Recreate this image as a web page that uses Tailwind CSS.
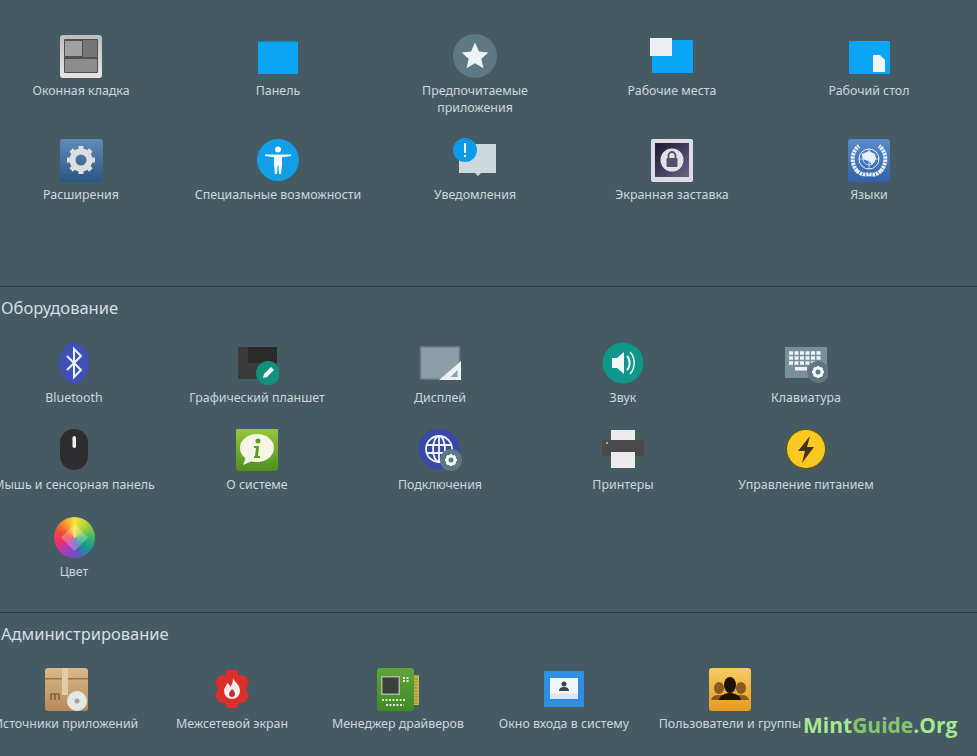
<!DOCTYPE html>
<html lang="ru">
<head>
    <meta charset="UTF-8">
    <meta name="viewport" content="width=device-width, initial-scale=1.0">
    <script src="https://cdn.jsdelivr.net/npm/@tailwindcss/browser@4"></script>
    <title>Параметры системы</title>
</head>
<body class="bg-[#465a63] font-['Noto_Sans','Open_Sans',sans-serif] text-[12.4px] leading-[17px] text-[#ccd7db] overflow-hidden">
<div class="relative h-[756px] w-[977px] overflow-hidden">

    <!-- Personal -->
    <section class="h-[286px] pt-[34px]">
        <div class="grid grid-cols-[repeat(5,197px)] auto-rows-[104px] ml-[-17.5px]">
            <div class="flex flex-col items-center">
                <svg class="w-[44px] h-[44px]" viewBox="0 0 44 44">
                    <defs><linearGradient id="tileFrame" x1="0" y1="0" x2="0" y2="1"><stop offset="0" stop-color="#bdbdbd"/><stop offset="1" stop-color="#e6e6e6"/></linearGradient></defs>
                    <rect x="1" y="1" width="42" height="43" rx="3" fill="url(#tileFrame)"/>
                    <rect x="5" y="5" width="34" height="34" rx="1" fill="#4f4f4f"/>
                    <rect x="6" y="7" width="17" height="15" fill="#a0a0a0"/>
                    <rect x="24" y="6" width="14" height="17" fill="#767676"/>
                    <rect x="6" y="25" width="32" height="13" fill="#8c8c8c"/>
                </svg>
                <span class="mt-[4px]">Оконная кладка</span>
            </div>
            <div class="flex flex-col items-center">
                <svg class="w-[44px] h-[44px]" viewBox="0 0 44 44">
                    <rect x="2" y="7" width="40" height="33" rx="1" fill="#0aa5f5"/>
                    <rect x="2" y="7" width="40" height="1.500" fill="#1588c4"/>
                </svg>
                <span class="mt-[4px]">Панель</span>
            </div>
            <div class="flex flex-col items-center">
                <svg class="w-[44px] h-[44px]" viewBox="0 0 44 44">
                    <circle cx="22" cy="22" r="22" fill="#5f7885"/>
                    <path d="M22 8.500l4 9 9.500.9-7.200 6.300 2.200 9.500-8.500-5-8.500 5 2.200-9.500-7.200-6.300 9.500-.9z" fill="#eef2f4"/>
                </svg>
                <span class="mt-[4px] text-center">Предпочитаемые<br>приложения</span>
            </div>
            <div class="flex flex-col items-center">
                <svg class="w-[44px] h-[44px]" viewBox="0 0 44 44">
                    <rect x="2" y="6" width="41" height="33" rx="1" fill="#0aa5f5"/>
                    <rect x="0" y="4" width="22" height="18" fill="#eceff0"/>
                </svg>
                <span class="mt-[4px]">Рабочие места</span>
            </div>
            <div class="flex flex-col items-center">
                <svg class="w-[44px] h-[44px]" viewBox="0 0 44 44">
                    <rect x="2" y="7" width="41" height="33" rx="1" fill="#0aa5f5"/>
                    <path d="M26 21h7l5 5v12H26z" fill="#eef4f6"/>
                </svg>
                <span class="mt-[4px]">Рабочий стол</span>
            </div>

            <div class="flex flex-col items-center">
                <svg class="w-[44px] h-[44px]" viewBox="0 0 44 44">
                    <defs><linearGradient id="extBg" x1="0" y1="0" x2="0" y2="1"><stop offset="0" stop-color="#5f8cb8"/><stop offset="1" stop-color="#2a5583"/></linearGradient></defs>
                    <rect x="1" y="1" width="43" height="43" rx="3" fill="url(#extBg)"/>
                    <circle cx="22" cy="22" r="8.500" fill="none" stroke="#dedede" stroke-width="6"/>
                    <path d="M22 8v5M22 36v-5M8 22h5M36 22h-5M12.100 12.100l3.500 3.500M31.900 31.900l-3.500-3.500M31.900 12.100l-3.500 3.500M12.100 31.900l3.500-3.500" stroke="#dedede" stroke-width="5"/>
                </svg>
                <span class="mt-[4px]">Расширения</span>
            </div>
            <div class="flex flex-col items-center">
                <svg class="w-[44px] h-[44px]" viewBox="0 0 44 44">
                    <circle cx="22" cy="22" r="21" fill="#129fe6"/>
                    <circle cx="22" cy="11.500" r="3" fill="#f2fafd"/>
                    <path d="M9 16.500h26V18l-9 1.200V27l-1 9h-2l-.6-8.500h-.8L21 36h-2l-1-9v-7.800L9 18z" fill="#f2fafd"/>
                </svg>
                <span class="mt-[4px] whitespace-nowrap">Специальные возможности</span>
            </div>
            <div class="flex flex-col items-center">
                <svg class="w-[44px] h-[44px]" viewBox="0 0 44 44">
                    <path d="M6 6h37v29H28l-3 3-3-3H6z" fill="#cfd8dc"/>
                    <circle cx="12" cy="12" r="12" fill="#0f9ae8"/>
                    <rect x="11" y="5" width="2" height="10" fill="#f4fbff"/>
                    <rect x="11" y="17" width="2" height="2" fill="#f4fbff"/>
                </svg>
                <span class="mt-[4px]">Уведомления</span>
            </div>
            <div class="flex flex-col items-center">
                <svg class="w-[44px] h-[44px]" viewBox="0 0 44 44">
                    <defs><linearGradient id="lockBg" x1="0" y1="0" x2="1" y2="1"><stop offset="0" stop-color="#1b1830"/><stop offset="1" stop-color="#6c6288"/></linearGradient></defs>
                    <rect x="1" y="1" width="42" height="43" rx="2" fill="#dcdce4"/>
                    <rect x="5" y="5" width="34" height="34" fill="url(#lockBg)"/>
                    <circle cx="22" cy="22" r="11.500" fill="#e2e2e6"/>
                    <rect x="16.500" y="20" width="11" height="9" rx="1" fill="#54506e"/>
                    <path d="M18.500 20v-2.500a3.500 3.500 0 0 1 7 0V20" fill="none" stroke="#54506e" stroke-width="1.800"/>
                </svg>
                <span class="mt-[4px]">Экранная заставка</span>
            </div>
            <div class="flex flex-col items-center">
                <svg class="w-[44px] h-[44px]" viewBox="0 0 44 44">
                    <defs><linearGradient id="langBg" x1="0" y1="0" x2="0" y2="1"><stop offset="0" stop-color="#5a8ccb"/><stop offset="1" stop-color="#2f62a8"/></linearGradient></defs>
                    <rect x="1" y="1" width="42" height="43" rx="3" fill="url(#langBg)"/>
                    <g fill="none" stroke="#e9eff7">
                        <circle cx="22" cy="21" r="10" stroke-width="1"/>
                        <circle cx="22" cy="21" r="6" stroke-width=".8"/>
                        <path d="M22 11v20M12 21h20" stroke-width=".8"/>
                        <path d="M10 33C3 24 5 13 12 8M34 33c7-9 5-20-2-25M10 33c5 4 9 4 12 3 3 1 7 1 12-3" stroke-width="4" stroke-dasharray="2.500 .8"/>
                    </g>
                    <path d="M15 16l7-3 6 3 1 5-4 6-3-4-4-1-3-3z" fill="#e9eff7"/>
                </svg>
                <span class="mt-[4px]">Языки</span>
            </div>
        </div>
    </section>

    <!-- Hardware -->
    <section class="h-[326px] border-t border-[#2d3d47]">
        <h2 class="pl-px pt-[10px] text-[16.5px] leading-[22px] text-[#d5dfe3] h-[55px]">Оборудование</h2>
        <div class="grid grid-cols-[repeat(5,183px)] auto-rows-[87px] ml-[-17.5px]">
            <div class="flex flex-col items-center">
                <svg class="w-[44px] h-[44px]" viewBox="0 0 44 44">
                    <ellipse cx="22" cy="21" rx="15" ry="20.500" fill="#3f51b5"/>
                    <path d="M15 14l14 14-7 7V7l7 7-14 14" fill="none" stroke="#f2f4fb" stroke-width="2"/>
                </svg>
                <span class="mt-[3px]">Bluetooth</span>
            </div>
            <div class="flex flex-col items-center">
                <svg class="w-[44px] h-[44px]" viewBox="0 0 44 44">
                    <rect x="3" y="5" width="39" height="32" fill="#3a3a3a"/>
                    <rect x="13" y="5" width="29" height="16" fill="#2b2b2b"/>
                    <circle cx="33" cy="31" r="12" fill="#13917f"/>
                    <path d="M28 36l1-4 7-7 3 3-7 7z" fill="#eef8f6"/>
                </svg>
                <span class="mt-[3px]">Графический планшет</span>
            </div>
            <div class="flex flex-col items-center">
                <svg class="w-[44px] h-[44px]" viewBox="0 0 44 44">
                    <rect x="2.500" y="5" width="39" height="32" fill="#8d9ea6" stroke="#6d808a" stroke-width="1.500"/>
                    <path d="M43 19v19H21z" fill="#eef1f2"/>
                    <path d="M39.500 28v7h-7z" fill="#8d9ea6"/>
                </svg>
                <span class="mt-[3px]">Дисплей</span>
            </div>
            <div class="flex flex-col items-center">
                <svg class="w-[44px] h-[44px]" viewBox="0 0 44 44">
                    <circle cx="22" cy="21" r="20.500" fill="#10968a"/>
                    <path d="M11 16h5l7-6v22l-7-6h-5z" fill="#f0f7f6"/>
                    <path d="M26 14c3.500 3.500 3.500 10.500 0 14" fill="none" stroke="#f0f7f6" stroke-width="2"/>
                    <path d="M29 10c5.500 5.500 5.500 16.500 0 22" fill="none" stroke="#f0f7f6" stroke-width="1.500"/>
                </svg>
                <span class="mt-[3px]">Звук</span>
            </div>
            <div class="flex flex-col items-center">
                <svg class="w-[44px] h-[44px]" viewBox="0 0 44 44">
                    <rect x="1" y="5" width="42" height="31" fill="#78909c"/>
                    <path d="M5 11h33M5 16h33M5 21h26" fill="none" stroke="#eef2f4" stroke-width="3.500" stroke-dasharray="4 1.500"/>
                    <rect x="11" y="25" width="12" height="3.500" fill="#eef2f4"/>
                    <circle cx="34" cy="30" r="11" fill="#5f7783"/>
                    <circle cx="34" cy="30" r="4" fill="none" stroke="#f4f6f7" stroke-width="3"/>
                    <path d="M34 24v2M34 36v-2M28 30h2M40 30h-2M29.800 25.800l1.400 1.400M38.200 34.200l-1.400-1.400M38.200 25.800l-1.400 1.400M29.800 34.200l1.400-1.400" stroke="#f4f6f7" stroke-width="2"/>
                </svg>
                <span class="mt-[3px]">Клавиатура</span>
            </div>

            <div class="flex flex-col items-center">
                <svg class="w-[44px] h-[44px]" viewBox="0 0 44 44">
                    <rect x="8" y="0" width="28" height="41" rx="14" fill="#2e2e30"/>
                    <rect x="20.500" y="7" width="3.500" height="12" rx="1.700" fill="#f0f0f0"/>
                </svg>
                <span class="mt-[3px] whitespace-nowrap">Мышь и сенсорная панель</span>
            </div>
            <div class="flex flex-col items-center">
                <svg class="w-[44px] h-[44px]" viewBox="0 0 44 44">
                    <defs><linearGradient id="infoBg" x1="0" y1="0" x2="0" y2="1"><stop offset="0" stop-color="#96c93d"/><stop offset="1" stop-color="#4f8f1e"/></linearGradient></defs>
                    <rect x="1" y="-1" width="42" height="43" rx="3" fill="url(#infoBg)"/>
                    <ellipse cx="22" cy="19" rx="17" ry="14" fill="#f5f5e6"/>
                    <path d="M11 28l-3 8 9-4z" fill="#f5f5e6"/>
                    <circle cx="23" cy="12" r="2.500" fill="#5f9a25"/>
                    <path d="M19 17h5l-1 10h2v2h-6v-2h1l1-8h-2z" fill="#5f9a25"/>
                </svg>
                <span class="mt-[3px]">О системе</span>
            </div>
            <div class="flex flex-col items-center">
                <svg class="w-[44px] h-[44px]" viewBox="0 0 44 44">
                    <circle cx="21" cy="20" r="20.500" fill="#3949a8"/>
                    <g fill="none" stroke="#f2f4fb" stroke-width="1.800">
                        <circle cx="21" cy="20" r="13"/>
                        <ellipse cx="21" cy="20" rx="6" ry="13"/>
                        <path d="M21 7v26M8.500 16h25M8.500 24h25"/>
                    </g>
                    <circle cx="33" cy="31" r="11" fill="#5f7783"/>
                    <circle cx="33" cy="31" r="4" fill="none" stroke="#f4f6f7" stroke-width="3"/>
                    <path d="M33 25v2M33 37v-2M27 31h2M39 31h-2M28.800 26.800l1.400 1.400M37.200 35.200l-1.400-1.400M37.200 26.800l-1.400 1.400M28.800 35.200l1.400-1.400" stroke="#f4f6f7" stroke-width="2"/>
                </svg>
                <span class="mt-[3px]">Подключения</span>
            </div>
            <div class="flex flex-col items-center">
                <svg class="w-[44px] h-[44px]" viewBox="0 0 44 44">
                    <rect x="10" y="1" width="24" height="12" fill="#ececec"/>
                    <rect x="1" y="11" width="42" height="16" rx="2" fill="#4b4a4a"/>
                    <rect x="10" y="23" width="24" height="16" fill="#ececec"/>
                    <circle cx="6" cy="14" r="1" fill="#c7d98a"/>
                </svg>
                <span class="mt-[3px]">Принтеры</span>
            </div>
            <div class="flex flex-col items-center">
                <svg class="w-[44px] h-[44px]" viewBox="0 0 44 44">
                    <circle cx="22" cy="20" r="20.500" fill="#5a5a26"/>
                    <circle cx="22" cy="20" r="19" fill="#f9c822"/>
                    <path d="M26 7L14 22h7l-3 12 12-16h-7z" fill="#3d3220"/>
                </svg>
                <span class="mt-[3px]">Управление питанием</span>
            </div>

            <div class="flex flex-col items-center">
                <div class="relative w-[41px] h-[41px] mt-px mb-[2px] overflow-hidden rounded-full bg-[conic-gradient(#f6e33b_0deg,#a6d23a_45deg,#3fb56a_90deg,#0f9a90_130deg,#5e57c0_170deg,#a53cc0_210deg,#e8306e_250deg,#f04a3a_290deg,#f6922e_325deg,#f6e33b_360deg)]">
                    <div class="absolute inset-[11px] rotate-45 bg-white/25"></div>
                </div>
                <span class="mt-[3px]">Цвет</span>
            </div>
        </div>
    </section>

    <!-- Administration -->
    <section class="border-t border-[#2d3d47]">
        <h2 class="pl-px pt-[10px] text-[16.5px] leading-[22px] text-[#d5dfe3] h-[54px]">Администрирование</h2>
        <div class="grid grid-cols-[repeat(5,166px)] ml-[-17px]">
            <div class="flex flex-col items-center">
                <svg class="w-[44px] h-[44px]" viewBox="0 0 44 44">
                    <defs><linearGradient id="boxBg" x1="0" y1="0" x2="0" y2="1"><stop offset="0" stop-color="#d9b98a"/><stop offset="1" stop-color="#b68a58"/></linearGradient></defs>
                    <rect x="1" y="1" width="43" height="43" rx="3" fill="url(#boxBg)"/>
                    <rect x="1" y="11" width="43" height="1.500" fill="#9c7446"/>
                    <rect x="18" y="1" width="6" height="27" fill="#e3cba6"/>
                    <path d="M7 27h8M7 27v6M11 27v6M15 27v6" stroke="#6e5030" stroke-width="1.200" fill="none"/>
                    <circle cx="33" cy="34" r="10" fill="#e4e8e4"/>
                    <circle cx="33" cy="34" r="2.500" fill="#9aa39a"/>
                </svg>
                <span class="mt-[4px] whitespace-nowrap">Источники приложений</span>
            </div>
            <div class="flex flex-col items-center">
                <svg class="w-[44px] h-[44px]" viewBox="0 0 44 44">
                    <path d="M17 3h10l2 5 6 1 4 6-3 7 3 7-4 6-6 1-2 5H17l-2-5-6-1-4-6 3-7-3-7 4-6 6-1z" fill="#d9302c"/>
                    <path d="M23 11c1 4 7 6 7 13a8 8 0 0 1-16 0c0-4 3-5 3-8 2 1 3 2 3 4 2-2 3-5 3-9z" fill="#f6eeee"/>
                    <path d="M22 22c2 2 3 3 3 5a3 3 0 0 1-6 0c0-2 2-3 3-5z" fill="#c0302c"/>
                </svg>
                <span class="mt-[4px]">Межсетевой экран</span>
            </div>
            <div class="flex flex-col items-center">
                <svg class="w-[44px] h-[44px]" viewBox="0 0 44 44">
                    <defs><linearGradient id="chipBg" x1="0" y1="0" x2="0" y2="1"><stop offset="0" stop-color="#5ea53a"/><stop offset="1" stop-color="#3f8a26"/></linearGradient></defs>
                    <rect x="35" y="8" width="8" height="30" fill="#c9b84a"/>
                    <path d="M36 9h6M36 12h6M36 15h6M36 18h6M36 21h6M36 24h6M36 27h6M36 30h6M36 33h6M36 36h6" stroke="#8f8428" stroke-width="1"/>
                    <rect x="1" y="1" width="37" height="43" rx="3" fill="url(#chipBg)"/>
                    <rect x="5" y="9" width="19" height="19" fill="#a9b8a0"/>
                    <rect x="6.500" y="10.500" width="16" height="16" fill="#39423a"/>
                    <path d="M27 11h7M27 14h7M6 33h24M10 38h18" stroke="#e2ecd4" stroke-width="2" stroke-dasharray="2 1.500"/>
                </svg>
                <span class="mt-[4px]">Менеджер драйверов</span>
            </div>
            <div class="flex flex-col items-center">
                <svg class="w-[44px] h-[44px]" viewBox="0 0 44 44">
                    <rect x="2" y="4" width="40" height="36" fill="#2f8fe2"/>
                    <rect x="8" y="11" width="28" height="21" fill="#f2f6fa"/>
                    <rect x="8" y="26" width="28" height="6" fill="#dfe8f0"/>
                    <circle cx="22" cy="17" r="2.500" fill="#37474f"/>
                    <path d="M17 24c0-3 2-4 5-4s5 1 5 4z" fill="#37474f"/>
                </svg>
                <span class="mt-[4px]">Окно входа в систему</span>
            </div>
            <div class="flex flex-col items-center">
                <svg class="w-[44px] h-[44px]" viewBox="0 0 44 44">
                    <defs><linearGradient id="usersBg" x1="0" y1="0" x2="0" y2="1"><stop offset="0" stop-color="#f6cc62"/><stop offset="1" stop-color="#e89a22"/></linearGradient></defs>
                    <rect x="1" y="1" width="42" height="43" rx="3" fill="url(#usersBg)"/>
                    <g fill="#8a5a1c">
                        <ellipse cx="11" cy="21" rx="5" ry="6"/>
                        <path d="M3 33c1-4 4-5 8-5s7 1 8 5z"/>
                        <ellipse cx="33" cy="21" rx="5" ry="6"/>
                        <path d="M25 33c1-4 4-5 8-5s7 1 8 5z"/>
                    </g>
                    <g fill="#1e1208">
                        <ellipse cx="22" cy="18" rx="6" ry="8"/>
                        <path d="M11 33c1-5 6-7 11-7s10 2 11 7z"/>
                    </g>
                </svg>
                <span class="mt-[4px] whitespace-nowrap">Пользователи и группы</span>
            </div>
        </div>
    </section>

    <!-- Watermark -->
    <div class="absolute left-[803px] top-[710px] text-[21px] leading-[30px] font-bold font-['Open_Sans',sans-serif] text-[#a5e88f] whitespace-nowrap">Mint<span class="text-[#85c66d]">Guide</span>.Org</div>
</div>
</body>
</html>
